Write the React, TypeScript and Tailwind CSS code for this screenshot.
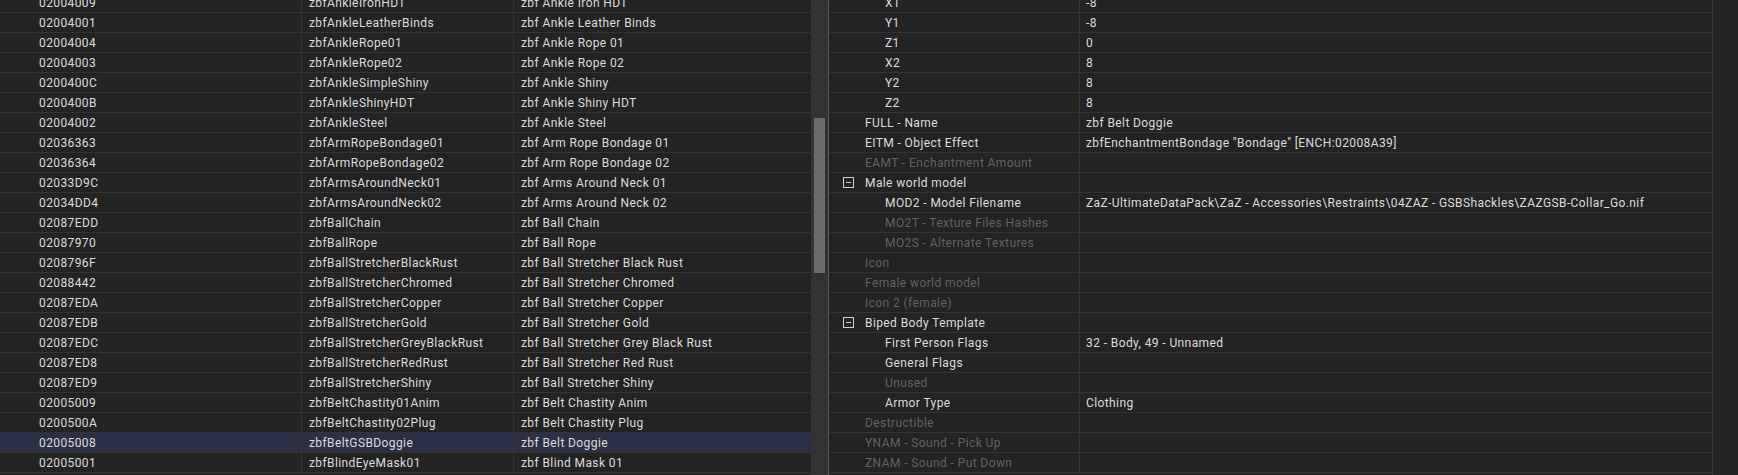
import React from 'react';

const records = [
  ['02004009', 'zbfAnkleIronHDT', 'zbf Ankle Iron HDT'],
  ['02004001', 'zbfAnkleLeatherBinds', 'zbf Ankle Leather Binds'],
  ['02004004', 'zbfAnkleRope01', 'zbf Ankle Rope 01'],
  ['02004003', 'zbfAnkleRope02', 'zbf Ankle Rope 02'],
  ['0200400C', 'zbfAnkleSimpleShiny', 'zbf Ankle Shiny'],
  ['0200400B', 'zbfAnkleShinyHDT', 'zbf Ankle Shiny HDT'],
  ['02004002', 'zbfAnkleSteel', 'zbf Ankle Steel'],
  ['02036363', 'zbfArmRopeBondage01', 'zbf Arm Rope Bondage 01'],
  ['02036364', 'zbfArmRopeBondage02', 'zbf Arm Rope Bondage 02'],
  ['02033D9C', 'zbfArmsAroundNeck01', 'zbf Arms Around Neck 01'],
  ['02034DD4', 'zbfArmsAroundNeck02', 'zbf Arms Around Neck 02'],
  ['02087EDD', 'zbfBallChain', 'zbf Ball Chain'],
  ['02087970', 'zbfBallRope', 'zbf Ball Rope'],
  ['0208796F', 'zbfBallStretcherBlackRust', 'zbf Ball Stretcher Black Rust'],
  ['02088442', 'zbfBallStretcherChromed', 'zbf Ball Stretcher Chromed'],
  ['02087EDA', 'zbfBallStretcherCopper', 'zbf Ball Stretcher Copper'],
  ['02087EDB', 'zbfBallStretcherGold', 'zbf Ball Stretcher Gold'],
  ['02087EDC', 'zbfBallStretcherGreyBlackRust', 'zbf Ball Stretcher Grey Black Rust'],
  ['02087ED8', 'zbfBallStretcherRedRust', 'zbf Ball Stretcher Red Rust'],
  ['02087ED9', 'zbfBallStretcherShiny', 'zbf Ball Stretcher Shiny'],
  ['02005009', 'zbfBeltChastity01Anim', 'zbf Belt Chastity Anim'],
  ['0200500A', 'zbfBeltChastity02Plug', 'zbf Belt Chastity Plug'],
  ['02005008', 'zbfBeltGSBDoggie', 'zbf Belt Doggie'],
  ['02005001', 'zbfBlindEyeMask01', 'zbf Blind Mask 01'],
];

const SELECTED = '02005008';

// level: 0 = top field, 1 = child; dim = field not present in record
type Field = { label: string; value?: string; level: number; dim?: boolean; group?: boolean };

const fields: Field[] = [
  { label: 'X1', value: '-8', level: 1 },
  { label: 'Y1', value: '-8', level: 1 },
  { label: 'Z1', value: '0', level: 1 },
  { label: 'X2', value: '8', level: 1 },
  { label: 'Y2', value: '8', level: 1 },
  { label: 'Z2', value: '8', level: 1 },
  { label: 'FULL - Name', value: 'zbf Belt Doggie', level: 0 },
  { label: 'EITM - Object Effect', value: 'zbfEnchantmentBondage "Bondage" [ENCH:02008A39]', level: 0 },
  { label: 'EAMT - Enchantment Amount', level: 0, dim: true },
  { label: 'Male world model', level: 0, group: true },
  { label: 'MOD2 - Model Filename', value: 'ZaZ-UltimateDataPack\\ZaZ - Accessories\\Restraints\\04ZAZ - GSBShackles\\ZAZGSB-Collar_Go.nif', level: 1 },
  { label: 'MO2T - Texture Files Hashes', level: 1, dim: true },
  { label: 'MO2S - Alternate Textures', level: 1, dim: true },
  { label: 'Icon', level: 0, dim: true },
  { label: 'Female world model', level: 0, dim: true },
  { label: 'Icon 2 (female)', level: 0, dim: true },
  { label: 'Biped Body Template', level: 0, group: true },
  { label: 'First Person Flags', value: '32 - Body, 49 - Unnamed', level: 1 },
  { label: 'General Flags', level: 1 },
  { label: 'Unused', level: 1, dim: true },
  { label: 'Armor Type', value: 'Clothing', level: 1 },
  { label: 'Destructible', level: 0, dim: true },
  { label: 'YNAM - Sound - Pick Up', level: 0, dim: true },
  { label: 'ZNAM - Sound - Put Down', level: 0, dim: true },
];

function CollapseBox() {
  return (
    <svg width="11" height="11" viewBox="0 0 11 11" className="shrink-0">
      <rect x="0.5" y="0.5" width="10" height="10" fill="none" stroke="#cfcfcf" strokeWidth="1" />
      <line x1="3" y1="5.5" x2="8" y2="5.5" stroke="#cfcfcf" strokeWidth="1" />
    </svg>
  );
}

export default function App() {
  return (
    <div
      className="w-[1738px] h-[475px] overflow-hidden bg-[#232323] text-[#dcdcdc] text-[12px] tracking-[0.4px] flex"
      style={{ fontFamily: 'Roboto, "Noto Sans", sans-serif' }}
    >
      {/* Record list */}
      <div className="w-[811px] shrink-0 overflow-hidden">
        <div className="-mt-[7px]">
          {records.map(([id, edid, name]) => (
            <div
              key={id}
              className={`flex h-[20px] border-b border-[#333333] ${id === SELECTED ? 'bg-[#2c3047]' : ''}`}
            >
              <div className="w-[301px] shrink-0 pl-[39px] flex items-center whitespace-nowrap">{id}</div>
              <div className="w-[212px] shrink-0 border-l border-[#333333] pl-[7px] flex items-center whitespace-nowrap">{edid}</div>
              <div className="flex-1 border-l border-[#333333] pl-[7px] flex items-center whitespace-nowrap">{name}</div>
            </div>
          ))}
        </div>
      </div>

      {/* Scrollbar */}
      <div className="w-[17px] shrink-0 bg-[#333333] flex flex-col px-[3px] pt-[118px]">
        <div className="h-[155px] bg-[#6b6b6b]" />
      </div>
      <div className="w-px shrink-0 bg-[#5a5a5a]" />

      {/* Record view */}
      <div className="w-[884px] shrink-0 overflow-hidden border-r border-[#333333]">
        <div className="-mt-[7px]">
          {fields.map((f, i) => (
            <div key={i} className="flex h-[20px] border-b border-[#333333]">
              <div
                className={`w-[250px] shrink-0 flex items-center whitespace-nowrap ${f.level === 1 ? 'pl-[56px]' : f.group ? 'pl-[14px]' : 'pl-[36px]'} ${f.dim ? 'text-[#626262]' : ''}`}
              >
                {f.group && <CollapseBox />}
                <span className={f.group ? 'ml-[11px]' : ''}>{f.label}</span>
              </div>
              <div className="flex-1 border-l border-[#333333] pl-[6px] flex items-center whitespace-nowrap">{f.value}</div>
            </div>
          ))}
        </div>
      </div>
      <div className="flex-1" />
    </div>
  );
}
